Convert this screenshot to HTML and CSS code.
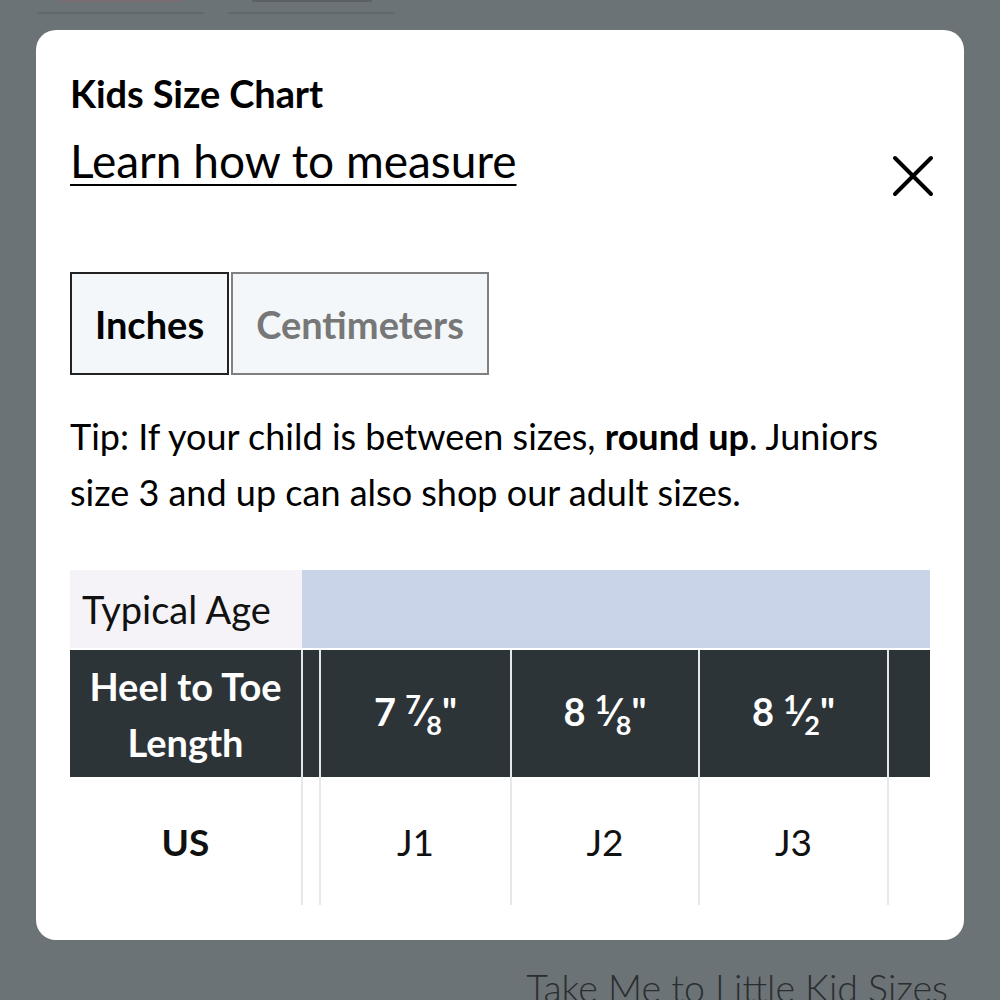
FILE: index.html
```html
<!DOCTYPE html>
<html lang="en">
<head>
<meta charset="utf-8">
<title>Kids Size Chart</title>
<link rel="stylesheet" href="styles.css">
</head>
<body>
<div class="backdrop-top">
  <div class="thumb"><span class="blob blob-pink"></span><span class="rule"></span></div>
  <div class="thumb"><span class="blob blob-dark"></span><span class="rule"></span></div>
</div>
<section class="modal">
  <h2 class="title">Kids Size Chart</h2>
  <div class="head-row">
    <a class="measure" href="#">Learn how to measure</a>
    <button class="close" aria-label="Close">
      <svg width="44" height="44" viewBox="0 0 44 44"><path d="M4 4 L40 40 M40 4 L4 40" stroke="#000" stroke-width="4" stroke-linecap="round" fill="none"/></svg>
    </button>
  </div>
  <div class="toggle">
    <button class="tog tog-active">Inches</button>
    <button class="tog tog-off">Centimeters</button>
  </div>
  <p class="tip">Tip: If your child is between sizes, <b>round up</b>. Juniors size 3 and up can also shop our adult sizes.</p>
  <div class="chart">
    <table class="sizes">
      <colgroup>
        <col class="c-first"><col class="c-narrow"><col class="c-a"><col class="c-b"><col class="c-c"><col class="c-d">
      </colgroup>
      <tr class="r-age">
        <td class="age-label">Typical Age</td>
        <td class="age-fill" colspan="5"></td>
      </tr>
      <tr class="r-gap"><td colspan="6"></td></tr>
      <tr class="r-len">
        <th class="len-label">Heel to Toe<br>Length</th>
        <th class="sep"></th>
        <th class="sep">7 <span class="frac"><sup>7</sup>⁄<sub>8</sub></span>"</th>
        <th class="sep">8 <span class="frac"><sup>1</sup>⁄<sub>8</sub></span>"</th>
        <th class="sep">8 <span class="frac"><sup>1</sup>⁄<sub>2</sub></span>"</th>
        <th class="sep"></th>
      </tr>
      <tr class="r-us">
        <td class="us-label">US</td>
        <td class="sepl"></td>
        <td class="sepl">J1</td>
        <td class="sepl">J2</td>
        <td class="sepl">J3</td>
        <td class="sepl"></td>
      </tr>
    </table>
  </div>
</section>
<div class="below">
  <a class="little" href="#">Take Me to Little Kid Sizes</a>
</div>
</body>
</html>
```
FILE: styles.css
```css
* { box-sizing: border-box; }
html, body { margin: 0; padding: 0; }
body {
  background: #6b7376;
  font-family: Lato, "Noto Sans", sans-serif;
  color: #000;
  width: 1000px;
  height: 1000px;
  overflow: hidden;
}
.backdrop-top {
  display: flex;
  gap: 24px;
  padding-left: 37px;
  height: 30px;
}
.thumb {
  width: 167px;
  display: flex;
  flex-direction: column;
  align-items: center;
}
.blob {
  width: 120px;
  height: 2px;
  border-radius: 0 0 40px 40px;
}
.blob-pink { background: #7a6a72; }
.blob-dark { background: #5b6064; }
.rule {
  margin-top: 10px;
  width: 100%;
  height: 2px;
  background: #62696c;
}
.modal {
  margin: 0 36px;
  height: 910px;
  background: #fff;
  border-radius: 20px;
  padding: 43px 34px 0 34px;
}
.title {
  margin: 0;
  font-size: 38px;
  font-weight: 700;
  line-height: 40px;
  letter-spacing: -0.1px;
}
.head-row {
  display: flex;
  justify-content: space-between;
  align-items: flex-start;
  margin-top: 20px;
}
.measure {
  font-size: 46px;
  line-height: 56px;
  color: #000;
  text-decoration: underline;
  text-decoration-thickness: 2px;
  text-underline-offset: 6px;
}
.close {
  background: none;
  border: 0;
  padding: 0;
  margin-top: 21px;
  margin-right: -5px;
  width: 44px;
  height: 44px;
}
.close svg { display: block; }
.toggle {
  display: flex;
  margin-top: 74px;
}
.tog {
  height: 103px;
  background: #f3f7fa;
  font-family: Lato, sans-serif;
  font-size: 38px;
  font-weight: 700;
  border: 2px solid;
  padding: 0;
}
.tog-active {
  width: 159px;
  border-color: #222;
  color: #000;
}
.tog-off {
  width: 258px;
  margin-left: 2px;
  border-color: #808080;
  color: #777;
}
.tip {
  margin: 33px 0 0 0;
  font-size: 36px;
  line-height: 56px;
  font-weight: 400;
}
.tip b { font-weight: 700; }
.chart {
  margin-top: 50px;
  width: 860px;
  overflow: hidden;
}
.sizes {
  border-collapse: collapse;
  table-layout: fixed;
  width: 924px;
}
.c-first { width: 232px; }
.c-narrow { width: 18px; }
.c-a { width: 191px; }
.c-b { width: 188px; }
.c-c { width: 189px; }
.c-d { width: 106px; }
.sizes td, .sizes th { padding: 0; }
.r-age td { height: 78px; }
.age-label {
  background: #f5f3f7;
  font-size: 38px;
  padding-left: 12px !important;
  font-weight: 400;
  color: #111;
}
.age-fill { background: #c9d4e8; }
.r-gap td { height: 2px; background: #fff; }
.r-len th {
  height: 127px;
  background: #2d3438;
  color: #fff;
  font-size: 38px;
  font-weight: 700;
  text-align: center;
}
.len-label { line-height: 56px; }
.r-len .sep { border-left: 2px solid #e3e6ea; }
.frac sup { font-size: 27px; vertical-align: 12px; }
.frac sub { font-size: 27px; vertical-align: -9px; }
.r-us td {
  height: 128px;
  text-align: center;
  font-size: 37px;
  color: #111;
}
.us-label { font-weight: 700; }
.r-us .sepl { border-left: 2px solid #e6e8ec; }
.below {
  display: flex;
  justify-content: flex-end;
  padding: 25px 52px 0 0;
}
.little {
  font-size: 37.5px;
  color: #2a2e30;
  text-decoration: none;
  font-weight: 300;
}
```
